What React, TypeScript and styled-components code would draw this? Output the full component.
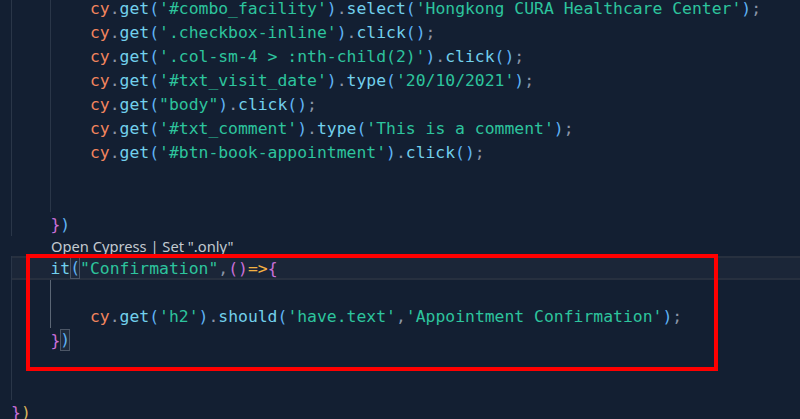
import React from "react";
import styled, { createGlobalStyle } from "styled-components";

const Global = createGlobalStyle`
  html, body { margin: 0; padding: 0; background: #131f32; overflow: hidden; }
  #root { width: 800px; height: 419px; }
`;

const C = {
  bg: "#131f32",
  obj: "#f2855e",
  fn: "#72d0ec",
  str: "#2dc49d",
  punc: "#8b95a6",
  b1: "#5fb3f5",
  b2: "#c96fd8",
  b3: "#d9b45a",
  arrow: "#f3b143",
  guide: "#2a3648",
  guideActive: "#5b6675",
  lens: "#c2c9d0",
};

const Editor = styled.div`
  position: relative;
  width: 800px;
  height: 419px;
  overflow: hidden;
  background: ${C.bg};
  box-sizing: border-box;
  padding-left: 11px;
  font-family: "DejaVu Sans Mono", "Liberation Mono", monospace;
  font-size: 16.4px;
`;

const Lines = styled.div`
  display: flex;
  flex-direction: column;
  margin-top: -4px;
`;

const Line = styled.div<{ $current?: boolean }>`
  display: flex;
  align-items: center;
  height: 24px;
  box-sizing: border-box;
  white-space: pre;
  ${(p) =>
    p.$current
      ? `background: #1b2638; border-top: 2px solid #27303f; border-bottom: 2px solid #27303f;`
      : ""}
`;

const Guide = styled.span<{ $active?: boolean }>`
  display: inline-block;
  width: 4ch;
  height: 24px;
  flex: none;
  box-sizing: border-box;
  border-left: 1px solid ${(p) => (p.$active ? C.guideActive : C.guide)};
`;

const Lens = styled.div`
  height: 20px;
  display: flex;
  align-items: center;
  padding-left: 40px;
  font-family: "Noto Sans", "Open Sans", sans-serif;
  font-size: 14.7px;
  color: ${C.lens};
  white-space: pre;
`;

const Tok = styled.span<{ $c: string }>`
  color: ${(p) => p.$c};
`;

const Match = styled.span<{ $c: string }>`
  color: ${(p) => p.$c};
  display: inline-block;
  height: 22px;
  line-height: 22px;
  box-shadow: inset 0 0 0 1px #4c5666;
  background: #1f2a3c;
`;

const Highlight = styled.div`
  position: absolute;
  left: 26px;
  top: 254px;
  width: 692px;
  height: 117px;
  box-sizing: border-box;
  border: 4px solid #ff0000;
  pointer-events: none;
`;

type T = [string, string];

const cyCall = (sel: string, method: string, arg?: string): T[] => {
  const out: T[] = [
    ["cy", C.obj],
    [".", C.punc],
    ["get", C.fn],
    ["(", C.b1],
    [sel, C.str],
    [")", C.b1],
    [".", C.punc],
    [method, C.fn],
    ["(", C.b1],
  ];
  if (arg) out.push([arg, C.str]);
  out.push([")", C.b1], [";", C.punc]);
  return out;
};

const Toks = ({ toks }: { toks: T[] }) => (
  <>
    {toks.map(([t, c], i) => (
      <Tok key={i} $c={c}>
        {t}
      </Tok>
    ))}
  </>
);

const Guides = ({ n, active }: { n: number; active?: number }) => (
  <>
    {Array.from({ length: n }).map((_, i) => (
      <Guide key={i} $active={active === i} />
    ))}
  </>
);

const topCalls: T[][] = [
  cyCall("'#combo_facility'", "select", "'Hongkong CURA Healthcare Center'"),
  cyCall("'.checkbox-inline'", "click"),
  cyCall("'.col-sm-4 > :nth-child(2)'", "click"),
  cyCall("'#txt_visit_date'", "type", "'20/10/2021'"),
  cyCall('"body"', "click"),
  cyCall("'#txt_comment'", "type", "'This is a comment'"),
  cyCall("'#btn-book-appointment'", "click"),
];

const shouldLine: T[] = [
  ["cy", C.obj],
  [".", C.punc],
  ["get", C.fn],
  ["(", C.b1],
  ["'h2'", C.str],
  [")", C.b1],
  [".", C.punc],
  ["should", C.fn],
  ["(", C.b1],
  ["'have.text'", C.str],
  [",", C.punc],
  ["'Appointment Confirmation'", C.str],
  [")", C.b1],
  [";", C.punc],
];

export default function App() {
  return (
    <>
      <Global />
      <Editor>
        <Lines>
          {topCalls.map((toks, i) => (
            <Line key={i}>
              <Guides n={2} />
              <Toks toks={toks} />
            </Line>
          ))}
          <Line>
            <Guides n={2} />
          </Line>
          <Line>
            <Guides n={2} />
          </Line>
          <Line>
            <Guides n={1} />
            <Tok $c={C.b2}>{"}"}</Tok>
            <Tok $c={C.b1}>{")"}</Tok>
          </Line>
          <Lens>Open Cypress | Set ".only"</Lens>
          <Line $current>
            <Guides n={1} />
            <Tok $c={C.fn}>it</Tok>
            <Match $c={C.b1}>(</Match>
            <Tok $c={C.str}>"Confirmation"</Tok>
            <Tok $c={C.punc}>,</Tok>
            <Tok $c={C.b2}>()</Tok>
            <Tok $c={C.arrow}>{"=>"}</Tok>
            <Tok $c={C.b2}>{"{"}</Tok>
          </Line>
          <Line>
            <Guides n={2} active={1} />
          </Line>
          <Line>
            <Guides n={2} active={1} />
            <Toks toks={shouldLine} />
          </Line>
          <Line>
            <Guides n={1} />
            <Tok $c={C.b2}>{"}"}</Tok>
            <Match $c={C.b1}>)</Match>
          </Line>
          <Line>
            <Guides n={1} />
          </Line>
          <Line>
            <Guides n={1} />
          </Line>
          <Line>
            <Tok $c={C.b2}>{"}"}</Tok>
            <Tok $c={C.b3}>{")"}</Tok>
          </Line>
        </Lines>
        <Highlight />
      </Editor>
    </>
  );
}
